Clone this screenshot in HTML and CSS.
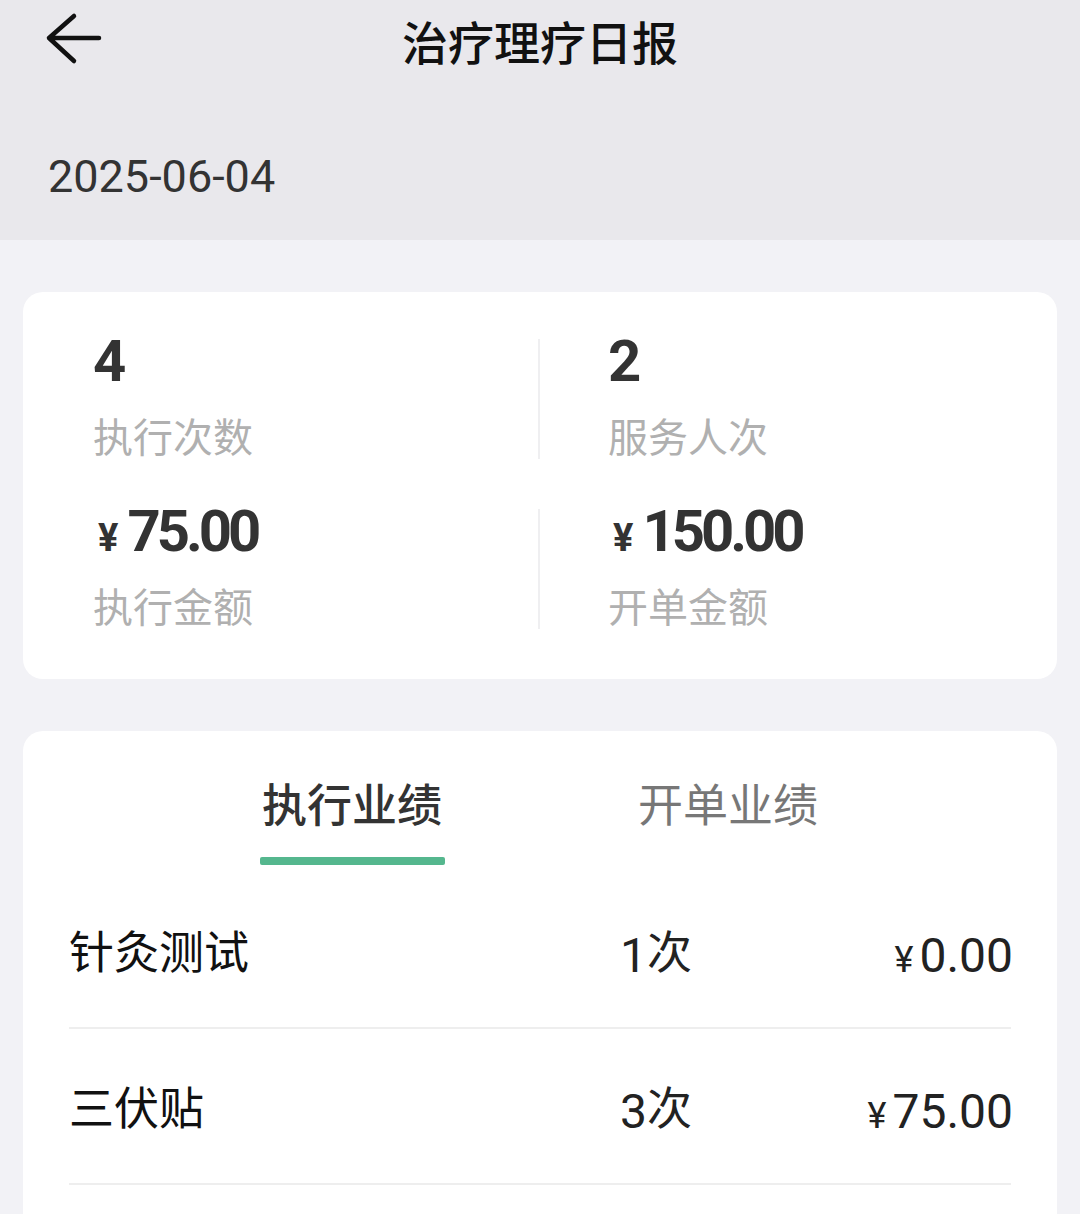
FILE: index.html
```html
<!DOCTYPE html>
<html lang="zh-CN">
<head>
  <meta charset="UTF-8">
  <title>治疗理疗日报</title>
  <link rel="stylesheet" href="styles.css">
</head>
<body>

  <div class="header">
    <div class="nav">
      <svg class="back" width="60" height="60" viewBox="0 0 60 60">
        <path d="M55 28H5M30 6L5 28L30 51" fill="none" stroke="#111" stroke-width="4.5" stroke-linecap="round" stroke-linejoin="round"/>
      </svg>
      <div class="title">治疗理疗日报</div>
      <div></div>
    </div>
    <div class="date">2025-06-04</div>
  </div>

  <div class="card stats">
    <div class="cell">
      <div class="value">4</div>
      <div class="label">执行次数</div>
    </div>
    <div class="cell">
      <div class="value">2</div>
      <div class="label">服务人次</div>
    </div>
    <div class="cell">
      <div class="value"><span class="yen">¥</span>75.00</div>
      <div class="label">执行金额</div>
    </div>
    <div class="cell">
      <div class="value"><span class="yen">¥</span>150.00</div>
      <div class="label">开单金额</div>
    </div>
  </div>

  <div class="card detail">
    <div class="tabs">
      <div class="tab active">执行业绩</div>
      <div class="tab">开单业绩</div>
    </div>

    <div class="list">
      <div class="row">
        <div class="name">针灸测试</div>
        <div class="count"><span class="num">1</span>次</div>
        <div class="amount"><span class="yen">¥</span><span class="num">0.00</span></div>
      </div>
      <div class="row">
        <div class="name">三伏贴</div>
        <div class="count"><span class="num">3</span>次</div>
        <div class="amount"><span class="yen">¥</span><span class="num">75.00</span></div>
      </div>
    </div>
  </div>

</body>
</html>
```

FILE: styles.css
```css
body {
  margin: 0;
  background: #f2f2f6;
  color: #111;
  font-family: "Noto Sans CJK SC", sans-serif;
}

.header {
  background: #e9e8ec;
  height: 240px;
}

.nav {
  display: grid;
  grid-template-columns: 1fr auto 1fr;
  align-items: center;
  height: 80px;
}

.back {
  margin-left: 44px;
}

.title {
  font-size: 46px;
  font-weight: 500;
  line-height: 80px;
}

.date {
  padding: 67px 48px 0;
  font-family: Roboto, sans-serif;
  font-size: 45px;
  line-height: 60px;
  color: #333;
}

.card {
  background: #fff;
  margin: 52px 23px 0;
  border-radius: 20px;
}

.stats {
  display: grid;
  grid-template-columns: 515px 1fr;
  row-gap: 50px;
  padding: 47px 0 50px;
}

.cell {
  height: 120px;
  padding-left: 70px;
}

.cell:nth-child(2n) {
  border-left: 2px solid #efeff1;
  padding-left: 68px;
}

.value {
  height: 44px;
  font-family: Roboto, sans-serif;
  font-weight: 700;
  font-size: 58px;
  line-height: 44px;
  letter-spacing: -4px;
  color: #333;
}

.value .yen {
  font-size: 38px;
  line-height: 0;
  letter-spacing: 0;
  margin: 0 9px 0 5px;
}

.label {
  margin-top: 32px;
  font-size: 40px;
  line-height: 40px;
  color: #b0b0b0;
}

.detail {
  border-radius: 20px 20px 0 0;
  padding-bottom: 40px;
}

.tabs {
  display: flex;
  justify-content: center;
  gap: 191px;
  padding-top: 42px;
}

.tab {
  width: 185px;
  text-align: center;
  font-size: 45px;
  line-height: 60px;
  color: #777;
}

.tab.active {
  color: #333;
  font-weight: 500;
}

.tab.active::after {
  content: "";
  display: block;
  height: 8px;
  margin-top: 24px;
  background: #55b78e;
  border-radius: 2px;
}

.list {
  margin-top: 8px;
  padding: 0 46px;
}

.row {
  display: grid;
  grid-template-columns: 1fr auto 319px;
  align-items: center;
  height: 154px;
  border-bottom: 2px solid #eeeeee;
  font-size: 45px;
  line-height: 60px;
}

.count {
  text-align: right;
  color: #222;
}

.amount {
  text-align: right;
  margin-right: -2px;
  color: #222;
}

.num {
  font-family: Roboto, sans-serif;
  font-size: 48px;
  line-height: 0;
  vertical-align: -3px;
}

.amount .yen {
  font-family: Roboto, sans-serif;
  font-size: 36px;
  line-height: 0;
  vertical-align: -3px;
  margin-right: 6px;
}
```
